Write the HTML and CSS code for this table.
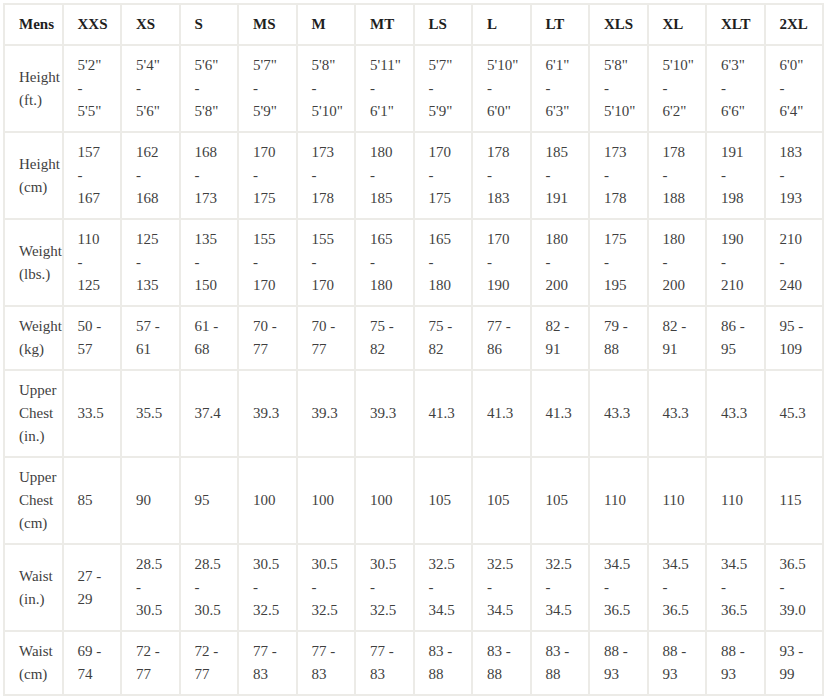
FILE: index.html
```html
<!DOCTYPE html>
<html>
<head>
<meta charset="utf-8">
<link rel="stylesheet" href="styles.css">
</head>
<body>
<div class="wrap">
<table class="size-table">
<thead>
<tr><th>Mens</th><th>XXS</th><th>XS</th><th>S</th><th>MS</th><th>M</th><th>MT</th><th>LS</th><th>L</th><th>LT</th><th>XLS</th><th>XL</th><th>XLT</th><th>2XL</th></tr>
</thead>
<tbody>
<tr><td>Height (ft.)</td><td>5'2" - 5'5"</td><td>5'4" - 5'6"</td><td>5'6" - 5'8"</td><td>5'7" - 5'9"</td><td>5'8" - 5'10"</td><td>5'11" - 6'1"</td><td>5'7" - 5'9"</td><td>5'10" - 6'0"</td><td>6'1" - 6'3"</td><td>5'8" - 5'10"</td><td>5'10" - 6'2"</td><td>6'3" - 6'6"</td><td>6'0" - 6'4"</td></tr>
<tr><td>Height (cm)</td><td>157 - 167</td><td>162 - 168</td><td>168 - 173</td><td>170 - 175</td><td>173 - 178</td><td>180 - 185</td><td>170 - 175</td><td>178 - 183</td><td>185 - 191</td><td>173 - 178</td><td>178 - 188</td><td>191 - 198</td><td>183 - 193</td></tr>
<tr><td>Weight (lbs.)</td><td>110 - 125</td><td>125 - 135</td><td>135 - 150</td><td>155 - 170</td><td>155 - 170</td><td>165 - 180</td><td>165 - 180</td><td>170 - 190</td><td>180 - 200</td><td>175 - 195</td><td>180 - 200</td><td>190 - 210</td><td>210 - 240</td></tr>
<tr><td>Weight (kg)</td><td>50 - 57</td><td>57 - 61</td><td>61 - 68</td><td>70 - 77</td><td>70 - 77</td><td>75 - 82</td><td>75 - 82</td><td>77 - 86</td><td>82 - 91</td><td>79 - 88</td><td>82 - 91</td><td>86 - 95</td><td>95 - 109</td></tr>
<tr><td>Upper Chest (in.)</td><td>33.5</td><td>35.5</td><td>37.4</td><td>39.3</td><td>39.3</td><td>39.3</td><td>41.3</td><td>41.3</td><td>41.3</td><td>43.3</td><td>43.3</td><td>43.3</td><td>45.3</td></tr>
<tr><td>Upper Chest (cm)</td><td>85</td><td>90</td><td>95</td><td>100</td><td>100</td><td>100</td><td>105</td><td>105</td><td>105</td><td>110</td><td>110</td><td>110</td><td>115</td></tr>
<tr><td>Waist (in.)</td><td>27 - 29</td><td>28.5 - 30.5</td><td>28.5 - 30.5</td><td>30.5 - 32.5</td><td>30.5 - 32.5</td><td>30.5 - 32.5</td><td>32.5 - 34.5</td><td>32.5 - 34.5</td><td>32.5 - 34.5</td><td>34.5 - 36.5</td><td>34.5 - 36.5</td><td>34.5 - 36.5</td><td>36.5 - 39.0</td></tr>
<tr><td>Waist (cm)</td><td>69 - 74</td><td>72 - 77</td><td>72 - 77</td><td>77 - 83</td><td>77 - 83</td><td>77 - 83</td><td>83 - 88</td><td>83 - 88</td><td>83 - 88</td><td>88 - 93</td><td>88 - 93</td><td>88 - 93</td><td>93 - 99</td></tr>
</tbody>
</table>
</div>
</body>
</html>
```
FILE: styles.css
```css
html, body {
  margin: 0;
  padding: 0;
  background: #ffffff;
}
.wrap {
  padding: 3px 0 0 3px;
}
.size-table {
  width: 821px;
  table-layout: fixed;
  border-collapse: collapse;
  font-family: "Liberation Serif", "Times New Roman", serif;
  font-size: 15px;
  line-height: 23px;
  color: #3f3f3f;
  border: 2px solid #ecebe7;
}
.size-table th,
.size-table td {
  border: 2px solid #ecebe7;
  padding: 8px 14px;
  text-align: left;
  vertical-align: middle;
  overflow: visible;
}
.size-table th {
  font-weight: bold;
  color: #1e1e1e;
}
```
